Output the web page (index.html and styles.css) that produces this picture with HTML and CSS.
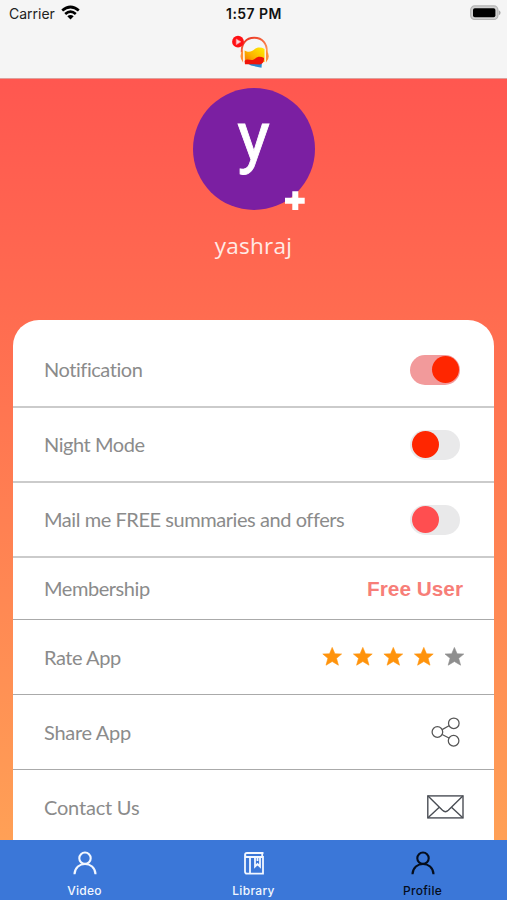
FILE: index.html
```html
<!DOCTYPE html>
<html lang="en">
<head>
<meta charset="utf-8">
<title>Profile</title>
<link rel="stylesheet" href="styles.css">
</head>
<body>
<div class="app">
  <header class="top">
    <div class="status">
      <div class="carrier"><span>Carrier</span>
        <svg width="19" height="15" viewBox="0 0 19 15"><g fill="none" stroke="#000" stroke-width="2.7"><path d="M1.2 5.5Q9.5-1.5 17.8 5.5"/><path d="M4.2 9Q9.5 4.4 14.8 9"/></g><path d="M6.3 11.2Q9.5 8.6 12.7 11.2L9.5 14.4Z"/></svg>
      </div>
      <div class="time">1:57 PM</div>
      <svg class="battery" width="31" height="16" viewBox="0 0 31 16"><rect x=".7" y=".9" width="27.2" height="13.6" rx="4" fill="#d0d0d0" stroke="#b4b4b4" stroke-width="1.2"/><rect x="3" y="3.2" width="22.4" height="9" rx="1.8"/><path d="M28.8 5.2Q30.6 6 30.6 7.7T28.8 10.2Z" fill="#a9a9a9"/></svg>
    </div>
    <svg class="logo" width="40" height="34" viewBox="0 0 40 34">
      <defs>
        <linearGradient id="wave" x1="1" y1="0" x2="0" y2="1"><stop offset="0" stop-color="#fff000"/><stop offset=".55" stop-color="#fdb400"/><stop offset="1" stop-color="#f56b00"/></linearGradient>
        <linearGradient id="band" x1="0" y1="0" x2="1" y2="1"><stop offset="0" stop-color="#e9291d"/><stop offset="1" stop-color="#ffa25e"/></linearGradient>
      </defs>
      <path d="M13 27L30 27L29.5 32.7L19 30.6Z" fill="#2588d2"/>
      <path d="M12.5 15.5C17 18 20 16.5 22.5 14.3C25 12 29 12 32.6 14V27L13 29Z" fill="url(#wave)"/>
      <path d="M12.5 26C16 22.5 19 27 23 23.8C26 21 29 21.5 32 23C32.3 27 30.5 29.2 28 29.4L13 29.2Z" fill="#ef1409"/>
      <path d="M9.8 17.5C9.2 8.5 14 2.8 22.2 2.8C30.4 2.8 35.4 8.5 34.8 17.5" fill="none" stroke="url(#band)" stroke-width="1.9"/>
      <path d="M11.7 13.5V28M33.4 14V28" stroke="#fff1df" stroke-width="1"/>
      <path d="M11 14.5Q6 21.5 11 27.5ZM34 14.5Q39.5 21.5 34 27.5Z" fill="#ff8e39"/>
      <circle cx="6" cy="6.7" r="5.9" fill="#ff1014"/>
      <path d="M4.2 4L9 6.8L4.2 9.7Z" fill="#ffd6db" stroke="#ff8790" stroke-width=".6"/>
    </svg>
  </header>
  <main class="content">
    <section class="user">
      <div class="avatar"><span class="initial">y</span>
        <svg class="plus" width="20" height="20" viewBox="0 0 20 20"><path d="M7.3.3h6v6.4h6.4v6h-6.4v6.4h-6v-6.4H0v-6h7.3Z" fill="#fff"/></svg>
      </div>
      <h1 class="name">yashraj</h1>
    </section>
    <section class="card">
      <div class="row first thick"><span class="label">Notification</span><span class="toggle on"><i class="knob"></i></span></div>
      <div class="row thick"><span class="label">Night Mode</span><span class="toggle"><i class="knob"></i></span></div>
      <div class="row thick"><span class="label">Mail me FREE summaries and offers</span><span class="toggle soft"><i class="knob"></i></span></div>
      <div class="row short"><span class="label">Membership</span><strong class="plan">Free User</strong></div>
      <div class="row"><span class="label low">Rate App</span>
        <svg class="stars" width="143" height="20" viewBox="0 0 143 20">
          <defs><path id="star" d="M0-9.6L2.7-3.2L9.4-3L4.3 1.3L6.2 8.2L0 4.5L-6.2 8.2L-4.3 1.3L-9.4-3L-2.7-3.2Z" stroke-linejoin="round" stroke-width=".6"/></defs>
          <g fill="#ff930c" stroke="#ff930c"><use href="#star" x="10.2" y="10"/><use href="#star" x="40.8" y="10"/><use href="#star" x="71.3" y="10"/><use href="#star" x="101.8" y="10"/></g><use href="#star" x="132.4" y="10" fill="#8e8e8e" stroke="#8e8e8e"/>
        </svg>
      </div>
      <div class="row"><span class="label low share">Share App</span>
        <svg class="share-icon" width="30" height="30" viewBox="0 0 30 30" fill="none" stroke="#555" stroke-width="1.25"><circle cx="6.4" cy="15" r="5.3"/><circle cx="22.8" cy="6.3" r="5.3"/><circle cx="22.6" cy="23.7" r="5.3"/><path d="M11.1 12.6L18 8.8M11.1 17.5L18 21"/></svg>
      </div>
      <div class="row last"><span class="label contact">Contact Us</span>
        <svg class="mail-icon" width="37" height="24" viewBox="0 0 37 24" fill="none" stroke="#4a4e55" stroke-width="1.4"><rect x=".8" y=".9" width="35.2" height="22"/><path d="M1 1L15.5 15.3Q18.4 18 21.3 15.3L35.8 1M1 22.7L12.3 12.2M35.8 22.7L24.5 12.2"/></svg>
      </div>
    </section>
  </main>
  <nav class="tabs">
    <a class="tab"><svg width="24" height="24" viewBox="0 0 24 24" fill="none" stroke="currentColor" stroke-width="2.1"><circle cx="12" cy="7.2" r="5.7"/><path d="M1.5 23.3C2 9.5 22 9.5 22.5 23.3"/></svg><span>Video</span></a>
    <a class="tab"><svg width="24" height="24" viewBox="0 0 24 24" fill="none" stroke="currentColor" stroke-width="1.8"><path d="M21.5 2H5Q3 2 3 4V20.5Q3 22.7 5 22.7H21V6H5Q3 6 3 3.8M20.2 2V6M8 6V22.7M13 6V15.5L15.5 13L18 15.5V6M15.5 6V10"/></svg><span>Library</span></a>
    <a class="tab active"><svg width="24" height="24" viewBox="0 0 24 24" fill="none" stroke="currentColor" stroke-width="2.1"><circle cx="12" cy="7.2" r="5.7"/><path d="M1.5 23.3C2 9.5 22 9.5 22.5 23.3"/></svg><span>Profile</span></a>
  </nav>
</div>
</body>
</html>
```
FILE: styles.css
```css
* { box-sizing: border-box; }
body { margin: 0; font-family: Inter, sans-serif; }
svg { display: block; flex: none; }
.app { width: 507px; height: 900px; display: flex; flex-direction: column; overflow: hidden; }
.top { height: 79px; flex: none; background: #f5f5f5; border-bottom: 1px solid #dda09c; }
.status { height: 27px; display: grid; grid-template-columns: 1fr auto 1fr; align-items: center; padding: 0 6px 0 9px; }
.carrier { display: flex; align-items: center; gap: 6px; font-size: 14px; color: #222; }
.carrier svg { margin-top: -2px; }
.time { font-size: 14px; font-weight: 600; color: #111; letter-spacing: .45px; margin-left: -2px; }
.battery { justify-self: end; margin-top: -1px; }
.logo { margin: 8px 0 0 232px; }
.content { flex: 1; min-height: 0; background: linear-gradient(#ff5750 0%, #ff6b50 30%, #ff8052 58%, #ffa056 100%); }
.user { height: 241px; padding-top: 9px; display: flex; flex-direction: column; align-items: center; }
.avatar { position: relative; width: 122px; height: 122px; border-radius: 50%; background: #7b1fa2; display: flex; justify-content: center; color: #fff; }
.initial { font: 400 69px/98px Roboto, sans-serif; -webkit-text-stroke: .8px #fff; }
.plus { position: absolute; left: 92px; top: 103px; }
.name { margin: 21px 0 0; font: 400 22.5px/30px "Open Sans", sans-serif; letter-spacing: .25px; color: #ffeae5; }
.card { width: 481px; margin-left: 13px; height: 520px; background: #fff; border-radius: 26px 26px 0 0; overflow: hidden; }
.row { height: 75px; display: flex; align-items: center; justify-content: space-between; padding: 0 31px; border-bottom: 1px solid #aaa; }
.thick { border-bottom: 2px solid #cbcbcb; }
.first { height: 88px; padding-top: 13px; }
.short { height: 62px; }
.last { border-bottom: 0; }
.label { font: 400 20px/26px Lato, sans-serif; letter-spacing: -.44px; color: #8b8b8b; white-space: nowrap; padding-bottom: 2px; }
.low { padding-bottom: 0; }
.share { letter-spacing: -.3px; }
.contact { letter-spacing: -.2px; }
.toggle { width: 50px; height: 30px; border-radius: 15px; background: #e9e9ea; margin-right: 3px; display: flex; align-items: center; padding: 0 1px 0 2px; }
.knob { width: 27px; height: 27px; border-radius: 50%; background: #ff2600; }
.on { background: #f29a9b; justify-content: flex-end; }
.soft .knob { background: #ff4e50; }
.plan { font: 700 20.8px/26px "Liberation Sans", sans-serif; color: #f77e78; }
.stars { margin-right: -2px; }
.share-icon { margin-right: 2px; }
.mail-icon { margin-right: -1px; margin-top: -2px; }
.tabs { height: 60px; flex: none; background: #3b77d8; display: grid; grid-template-columns: repeat(3, 1fr); }
.tab { display: flex; flex-direction: column; align-items: center; padding-top: 11px; color: #f2f7ff; }
.tab span { font-size: 12px; line-height: 16px; font-weight: 500; margin-top: 8px; letter-spacing: .3px; }
.active { color: #050d1c; }
```
